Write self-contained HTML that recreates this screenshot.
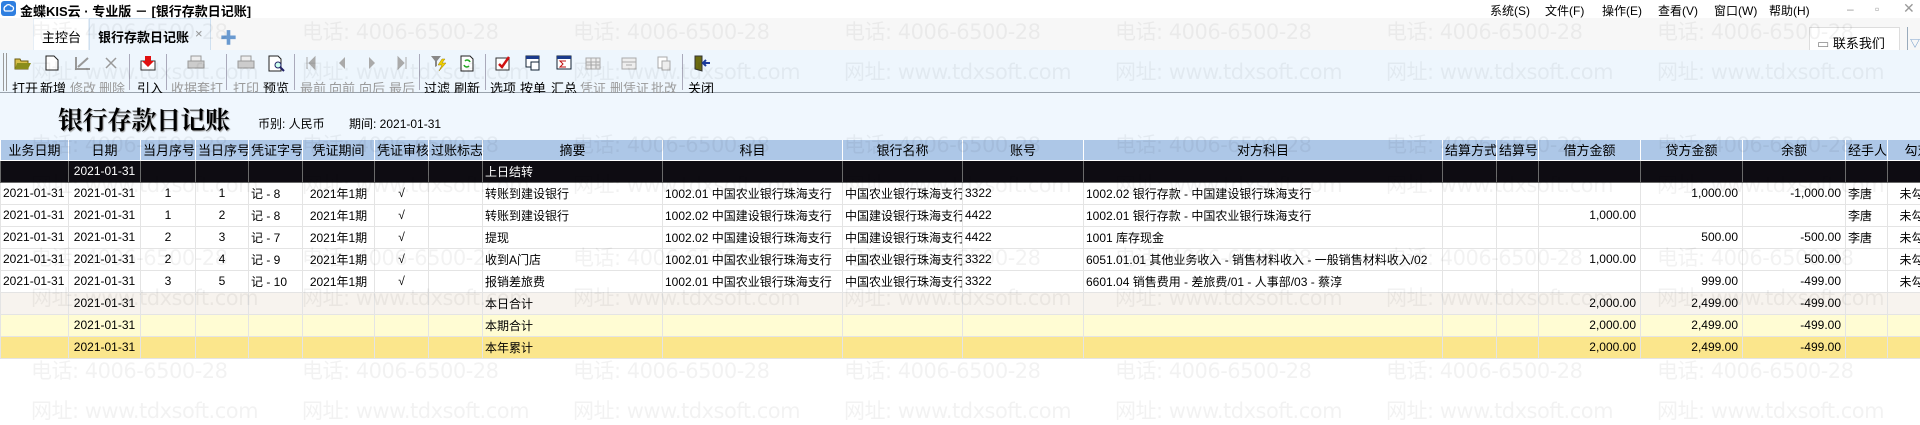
<!DOCTYPE html>
<html><head><meta charset="utf-8">
<style>
*{margin:0;padding:0;box-sizing:border-box}
body{width:1920px;height:414px;overflow:hidden;background:#fff;font-family:"Liberation Sans","Noto Sans CJK SC",sans-serif;font-size:12px;color:#000;position:relative}
.abs{position:absolute}
#titlebar{left:0;top:0;width:1920px;height:18px;background:#fff}
#tabrow{left:0;top:18px;width:1920px;height:32px;background:#f7f7f7}
#toolbar{left:0;top:50px;width:1920px;height:43px;background:#eef6fd;border-bottom:1px solid #9aa3ad}
#rtitle{left:0;top:93px;width:1920px;height:47px;background:#f0f7fe}
.tb{position:absolute;top:78px;font-size:13px;color:#000;white-space:nowrap}
.dis{color:#9a9a9a}
.sep{position:absolute;top:54px;width:1px;height:36px;background:#aab}
.ic{position:absolute;top:55px}
table{position:absolute;left:0;top:140px;border-collapse:collapse;table-layout:fixed;width:1947px}
td,th{height:22px;white-space:nowrap;overflow:hidden;border:1px solid #e4e4e4;padding:0 2px;font-weight:normal;font-size:12px}
th{height:20px;background:#adc7e7;border:1px solid #fff;border-top:none;font-size:13px}
tr.blk td{background:#0e0c12;color:#fff;border-color:#6a6a6a}
.c{text-align:center}.r{text-align:right;padding-right:4px}
tr.t1 td{background:#f7f3ee}
tr.t2 td{background:#fffcd3}
tr.t3 td{background:#fbe68c}
.wm{position:absolute;color:rgba(0,0,0,0.05);font-size:21px;white-space:nowrap;pointer-events:none;z-index:5;font-family:"DejaVu Sans","Noto Sans CJK SC",sans-serif;letter-spacing:-0.5px}
.menu{position:absolute;top:2px;font-size:12px}
</style></head><body>
<div id="titlebar" class="abs"></div>
<svg class="abs" style="left:1px;top:1px" width="15" height="15"><rect width="15" height="15" rx="3" fill="#2f7fe0"/><path d="M4 10a3 3 0 0 1 1-5 3 3 0 0 1 5 0 2.5 2.5 0 0 1 0 5z" fill="none" stroke="#fff" stroke-width="1.3"/></svg>
<div class="abs" style="left:20px;top:1px;font-weight:bold;font-size:13px">金蝶KIS云 · 专业版 － [银行存款日记账]</div>
<div class="menu" style="left:1490px">系统(S)</div>
<div class="menu" style="left:1545px">文件(F)</div>
<div class="menu" style="left:1602px">操作(E)</div>
<div class="menu" style="left:1658px">查看(V)</div>
<div class="menu" style="left:1714px">窗口(W)</div>
<div class="menu" style="left:1769px">帮助(H)</div>
<div class="menu" style="left:1847px;color:#999">–</div>
<div class="menu" style="left:1875px;color:#999">▫</div>
<div class="menu" style="left:1903px;color:#999;font-size:14px;top:0">✕</div>
<div id="tabrow" class="abs"></div>
<div class="abs" style="left:33px;top:18px;width:56px;height:32px;background:#fff;border:1px solid #e6eef6;border-bottom:none"></div>
<div class="abs" style="left:42px;top:27px;font-size:13px">主控台</div>
<div class="abs" style="left:89px;top:18px;width:122px;height:32px;background:#eef5fc;border:1px solid #cfe0f0;border-bottom:none"></div>
<div class="abs" style="left:98px;top:27px;font-size:13px;font-weight:bold">银行存款日记账</div>
<div class="abs" style="left:195px;top:26px;font-size:13px;color:#999">×</div>
<div class="abs" style="left:220px;top:24px;color:#6a9ad0;font-size:17px">✚</div>
<div class="abs" style="left:1809px;top:27px;width:91px;height:28px;background:#fff;border:1px solid #ddd"></div>
<div class="abs" style="left:1817px;top:33px;font-size:13px"><span style="color:#888">▭</span> 联系我们</div>
<div class="abs" style="left:1907px;top:27px;width:13px;height:28px;border-left:1px solid #9ab;color:#5a8ac0;font-size:10px;padding:8px 2px">▽</div>

<div id="toolbar" class="abs"></div>
<div class="abs" style="left:3px;top:53px;width:4px;height:38px;border-left:1px solid #999;border-right:1px solid #999"></div>
<svg class="ic" style="left:14px" width="18" height="16"><path d="M1 4h5l1 2h7v8H1z" fill="#d9c04a" stroke="#6b5a10"/><path d="M3 8h14l-3 6H1z" fill="#8a8d1c"/></svg>
<svg class="ic" style="left:45px" width="14" height="16"><path d="M1 1h8l4 4v10H1z" fill="#fff" stroke="#222"/></svg>
<svg class="ic" style="left:74px" width="18" height="16"><path d="M2 2v12h14M4 12l10-9" stroke="#999" stroke-width="2" fill="none"/></svg>
<svg class="ic" style="left:104px" width="14" height="16"><path d="M2 3l10 10M12 3L2 13" stroke="#999" stroke-width="1.5"/></svg>
<svg class="ic" style="left:140px" width="16" height="16"><rect x="1" y="6" width="14" height="9" fill="#fff" stroke="#333"/><path d="M5 1h6v5h3l-6 6-6-6h3z" fill="#e01010"/></svg>
<svg class="ic" style="left:187px" width="18" height="16"><rect x="1" y="6" width="16" height="7" fill="#ccc" stroke="#999"/><rect x="4" y="1" width="10" height="5" fill="#eee" stroke="#999"/></svg>
<svg class="ic" style="left:237px" width="18" height="16"><rect x="1" y="6" width="16" height="7" fill="#ccc" stroke="#999"/><rect x="4" y="1" width="10" height="5" fill="#eee" stroke="#999"/></svg>
<svg class="ic" style="left:268px" width="18" height="17"><path d="M1 1h9l3 3v12H1z" fill="#fff" stroke="#222"/><circle cx="10" cy="10" r="3" fill="#cfe" stroke="#226"/><path d="M12 12l4 4" stroke="#226" stroke-width="2"/></svg>
<svg class="ic" style="left:305px" width="12" height="16"><path d="M2 2v12M10 2L4 8l6 6z" fill="#aaa" stroke="#aaa"/></svg>
<svg class="ic" style="left:336px" width="12" height="16"><path d="M9 2L3 8l6 6z" fill="#aaa"/></svg>
<svg class="ic" style="left:366px" width="12" height="16"><path d="M3 2l6 6-6 6z" fill="#aaa"/></svg>
<svg class="ic" style="left:396px" width="12" height="16"><path d="M10 2v12M2 2l6 6-6 6z" fill="#aaa" stroke="#aaa"/></svg>
<svg class="ic" style="left:430px" width="18" height="17"><path d="M1 1h10L7 6v5L5 12V6z" fill="#888"/><path d="M12 4l-4 6h4l-3 6 7-8h-4l3-4z" fill="#f0d000" stroke="#a08000" stroke-width=".5"/></svg>
<svg class="ic" style="left:459px" width="16" height="17"><path d="M2 1h9l3 3v12H2z" fill="#fff" stroke="#222"/><path d="M6 6a3 3 0 0 1 5 1M10 11a3 3 0 0 1-5-1" stroke="#2a2" stroke-width="1.5" fill="none"/></svg>
<svg class="ic" style="left:495px" width="16" height="16"><rect x="1" y="3" width="13" height="12" fill="#fff" stroke="#333"/><path d="M4 9l3 3 7-10" stroke="#d01010" stroke-width="2.5" fill="none"/></svg>
<svg class="ic" style="left:525px" width="16" height="16"><rect x="1" y="1" width="13" height="11" fill="#fff" stroke="#123"/><rect x="1" y="1" width="13" height="3" fill="#1a3a8a"/><rect x="6" y="7" width="8" height="8" fill="#fff" stroke="#123"/></svg>
<svg class="ic" style="left:556px" width="16" height="16"><rect x="1" y="1" width="14" height="13" fill="#fff" stroke="#123"/><rect x="1" y="1" width="14" height="3" fill="#1a3a8a"/><path d="M10 6H4l3 3-3 3h6" stroke="#c01010" fill="none"/></svg>
<svg class="ic" style="left:585px" width="16" height="16"><rect x="1" y="3" width="14" height="11" fill="#eee" stroke="#aaa"/><path d="M1 7h14M1 10h14M6 3v11M11 3v11" stroke="#aaa"/></svg>
<svg class="ic" style="left:621px" width="16" height="16"><rect x="1" y="3" width="14" height="11" fill="#eee" stroke="#aaa"/><path d="M1 7h14M5 10h6" stroke="#aaa"/></svg>
<svg class="ic" style="left:656px" width="16" height="16"><rect x="2" y="2" width="9" height="11" fill="#fff" stroke="#aaa"/><rect x="6" y="6" width="8" height="9" fill="#eee" stroke="#aaa"/></svg>
<svg class="ic" style="left:693px" width="18" height="17"><path d="M2 1h7v15L2 14z" fill="#6b6b10" stroke="#333"/><path d="M17 8h-6M13 5l-3 3 3 3" stroke="#1a3a9a" stroke-width="2" fill="none"/></svg>
<div class="tb" style="left:12px">打开</div>
<div class="tb" style="left:40px">新增</div>
<div class="tb dis" style="left:70px">修改</div>
<div class="tb dis" style="left:99px">删除</div>
<div class="sep" style="left:129px"></div>
<div class="tb" style="left:137px">引入</div>
<div class="sep" style="left:166px"></div>
<div class="tb dis" style="left:171px">收据套打</div>
<div class="sep" style="left:226px"></div>
<div class="tb dis" style="left:233px">打印</div>
<div class="tb" style="left:263px">预览</div>
<div class="sep" style="left:294px"></div>
<div class="tb dis" style="left:300px">最前</div>
<div class="tb dis" style="left:329px">向前</div>
<div class="tb dis" style="left:359px">向后</div>
<div class="tb dis" style="left:389px">最后</div>
<div class="sep" style="left:419px"></div>
<div class="tb" style="left:424px">过滤</div>
<div class="tb" style="left:454px">刷新</div>
<div class="sep" style="left:485px"></div>
<div class="tb" style="left:490px">选项</div>
<div class="tb" style="left:520px">按单</div>
<div class="tb" style="left:551px">汇总</div>
<div class="tb dis" style="left:580px">凭证</div>
<div class="tb dis" style="left:610px">删凭证</div>
<div class="tb dis" style="left:651px">批改</div>
<div class="sep" style="left:682px"></div>
<div class="tb" style="left:688px">关闭</div>

<div id="rtitle" class="abs"></div>
<div class="abs" style="left:58px;top:101px;font-family:'Liberation Serif','Noto Serif CJK SC',serif;font-size:25px;font-weight:bold;letter-spacing:-0.5px;text-shadow:1px 1px 1px #999">银行存款日记账</div>
<div class="abs" style="left:258px;top:115px;font-size:12px">币别: 人民币</div>
<div class="abs" style="left:349px;top:115px;font-size:12px">期间: 2021-01-31</div>

<table>
<colgroup><col style="width:68px"><col style="width:72px"><col style="width:55px"><col style="width:53px"><col style="width:54px"><col style="width:72px"><col style="width:54px"><col style="width:54px"><col style="width:180px"><col style="width:180px"><col style="width:120px"><col style="width:121px"><col style="width:359px"><col style="width:54px"><col style="width:42px"><col style="width:102px"><col style="width:102px"><col style="width:103px"><col style="width:42px"><col style="width:60px"></colgroup>
<tr><th>业务日期</th><th>日期</th><th>当月序号</th><th>当日序号</th><th>凭证字号</th><th>凭证期间</th><th>凭证审核</th><th>过账标志</th><th>摘要</th><th>科目</th><th>银行名称</th><th>账号</th><th>对方科目</th><th>结算方式</th><th>结算号</th><th>借方金额</th><th>贷方金额</th><th>余额</th><th>经手人</th><th>勾对</th></tr>
<tr class="blk"><td></td><td class="c">2021-01-31</td><td></td><td></td><td></td><td></td><td></td><td></td><td>上日结转</td><td></td><td></td><td></td><td></td><td></td><td></td><td></td><td></td><td></td><td></td><td></td></tr>
<tr><td>2021-01-31</td><td class="c">2021-01-31</td><td class="c">1</td><td class="c">1</td><td>记 - 8</td><td class="c">2021年1期</td><td class="c">√</td><td></td><td>转账到建设银行</td><td>1002.01 中国农业银行珠海支行</td><td>中国农业银行珠海支行</td><td>3322</td><td>1002.02 银行存款 - 中国建设银行珠海支行</td><td></td><td></td><td></td><td class="r">1,000.00</td><td class="r">-1,000.00</td><td>李唐</td><td class="c">未勾对</td></tr>
<tr><td>2021-01-31</td><td class="c">2021-01-31</td><td class="c">1</td><td class="c">2</td><td>记 - 8</td><td class="c">2021年1期</td><td class="c">√</td><td></td><td>转账到建设银行</td><td>1002.02 中国建设银行珠海支行</td><td>中国建设银行珠海支行</td><td>4422</td><td>1002.01 银行存款 - 中国农业银行珠海支行</td><td></td><td></td><td class="r">1,000.00</td><td></td><td></td><td>李唐</td><td class="c">未勾对</td></tr>
<tr><td>2021-01-31</td><td class="c">2021-01-31</td><td class="c">2</td><td class="c">3</td><td>记 - 7</td><td class="c">2021年1期</td><td class="c">√</td><td></td><td>提现</td><td>1002.02 中国建设银行珠海支行</td><td>中国建设银行珠海支行</td><td>4422</td><td>1001 库存现金</td><td></td><td></td><td></td><td class="r">500.00</td><td class="r">-500.00</td><td>李唐</td><td class="c">未勾对</td></tr>
<tr><td>2021-01-31</td><td class="c">2021-01-31</td><td class="c">2</td><td class="c">4</td><td>记 - 9</td><td class="c">2021年1期</td><td class="c">√</td><td></td><td>收到A门店</td><td>1002.01 中国农业银行珠海支行</td><td>中国农业银行珠海支行</td><td>3322</td><td>6051.01.01 其他业务收入 - 销售材料收入 - 一般销售材料收入/02</td><td></td><td></td><td class="r">1,000.00</td><td></td><td class="r">500.00</td><td></td><td class="c">未勾对</td></tr>
<tr><td>2021-01-31</td><td class="c">2021-01-31</td><td class="c">3</td><td class="c">5</td><td>记 - 10</td><td class="c">2021年1期</td><td class="c">√</td><td></td><td>报销差旅费</td><td>1002.01 中国农业银行珠海支行</td><td>中国农业银行珠海支行</td><td>3322</td><td>6601.04 销售费用 - 差旅费/01 - 人事部/03 - 蔡淳</td><td></td><td></td><td></td><td class="r">999.00</td><td class="r">-499.00</td><td></td><td class="c">未勾对</td></tr>
<tr class="t1"><td></td><td class="c">2021-01-31</td><td></td><td></td><td></td><td></td><td></td><td></td><td>本日合计</td><td></td><td></td><td></td><td></td><td></td><td></td><td class="r">2,000.00</td><td class="r">2,499.00</td><td class="r">-499.00</td><td></td><td></td></tr>
<tr class="t2"><td></td><td class="c">2021-01-31</td><td></td><td></td><td></td><td></td><td></td><td></td><td>本期合计</td><td></td><td></td><td></td><td></td><td></td><td></td><td class="r">2,000.00</td><td class="r">2,499.00</td><td class="r">-499.00</td><td></td><td></td></tr>
<tr class="t3"><td></td><td class="c">2021-01-31</td><td></td><td></td><td></td><td></td><td></td><td></td><td>本年累计</td><td></td><td></td><td></td><td></td><td></td><td></td><td class="r">2,000.00</td><td class="r">2,499.00</td><td class="r">-499.00</td><td></td><td></td></tr>
</table>

<div id="wms"></div>
<script>
var h='';var xs=[31,302,573,844,1115,1386,1657];var ys=[16,129,242,355];
ys.forEach(function(y){xs.forEach(function(x){h+='<div class="wm" style="left:'+x+'px;top:'+y+'px">电话: 4006-6500-28</div><div class="wm" style="left:'+x+'px;top:'+(y+40)+'px">网址: www.tdxsoft.com</div>';});});
document.getElementById('wms').innerHTML=h;
</script>
</body></html>
